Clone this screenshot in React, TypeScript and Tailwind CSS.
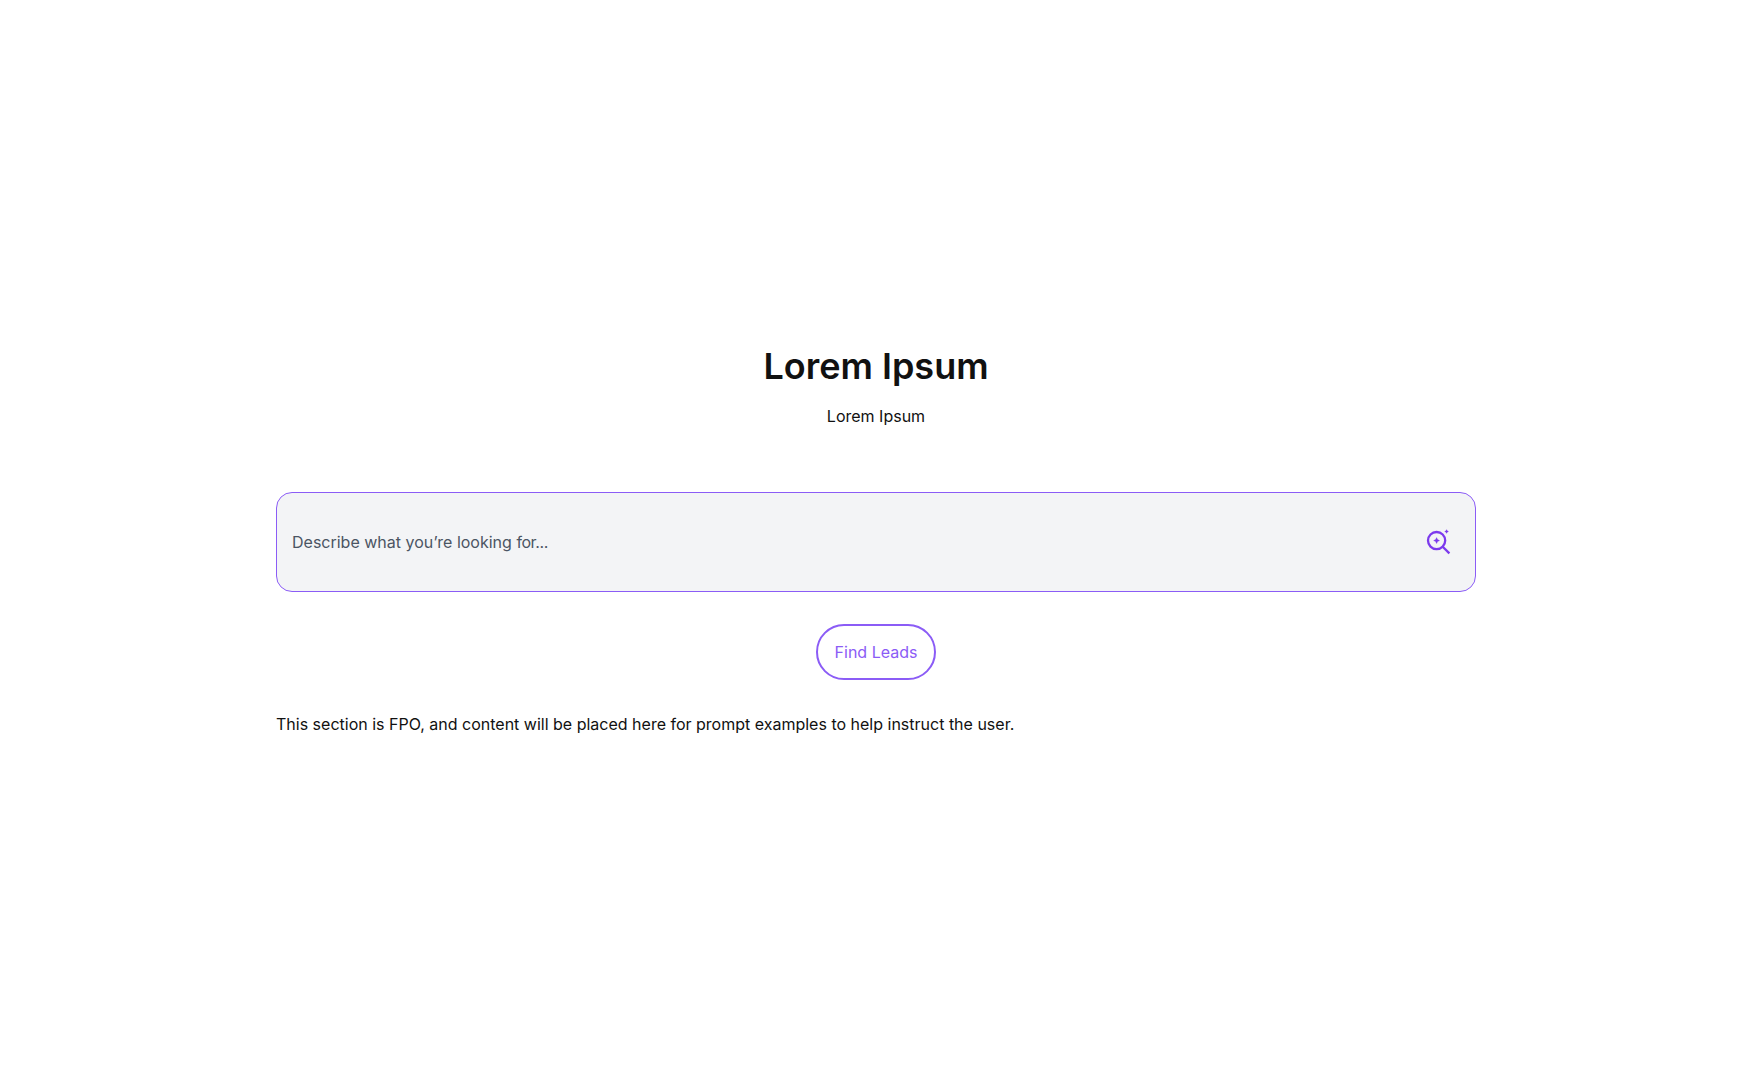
function SearchSparkleIcon() {
  return (
    <svg width="28" height="28" viewBox="0 0 28 28" fill="none">
      <circle cx="11.6" cy="12.6" r="8.6" stroke="#7c3aed" strokeWidth="2.3" />
      <path d="M17.7 18.7L24.4 25.4" stroke="#7c3aed" strokeWidth="2.3" />
      <path d="M11.6 9.6l1 2 2 1-2 1-1 2-1-2-2-1 2-1z" fill="#7c3aed" stroke="#7c3aed" strokeWidth=".3" />
      <path d="M21.6 1.5l.7 1.3 1.3.7-1.3.7-.7 1.3-.7-1.3-1.3-.7 1.3-.7z" fill="#7c3aed" stroke="#7c3aed" strokeWidth=".2" />
    </svg>
  )
}

export default function App() {
  return (
    <main className="flex min-h-screen flex-col items-center justify-center bg-white font-['Inter',sans-serif] text-base text-[#111111]">
      <div className="flex w-[1200px] flex-col items-center">
        <h1 className="text-4xl font-semibold leading-[44px]">Lorem Ipsum</h1>
        <p className="mt-4 leading-6">Lorem Ipsum</p>

        {/* Prompt box */}
        <div className="mt-16 flex h-[100px] w-full items-center justify-between rounded-2xl border border-[#8b5cf6] bg-[#f3f4f6] pl-[15px] pr-[22px]">
          <span className="text-[#4b5563]">
            Describe what you’re looking <span className="tracking-[-0.4px]">for...</span>
          </span>
          <SearchSparkleIcon />
        </div>

        <button className="mt-8 h-14 rounded-full border-2 border-[#8b5cf6] px-[17px] text-[#8b5cf6]">
          Find Leads
        </button>

        <p className="mt-8 w-full leading-6">
          This section is FPO, and content will be placed here for prompt examples to help instruct the user.
        </p>
      </div>
    </main>
  )
}
